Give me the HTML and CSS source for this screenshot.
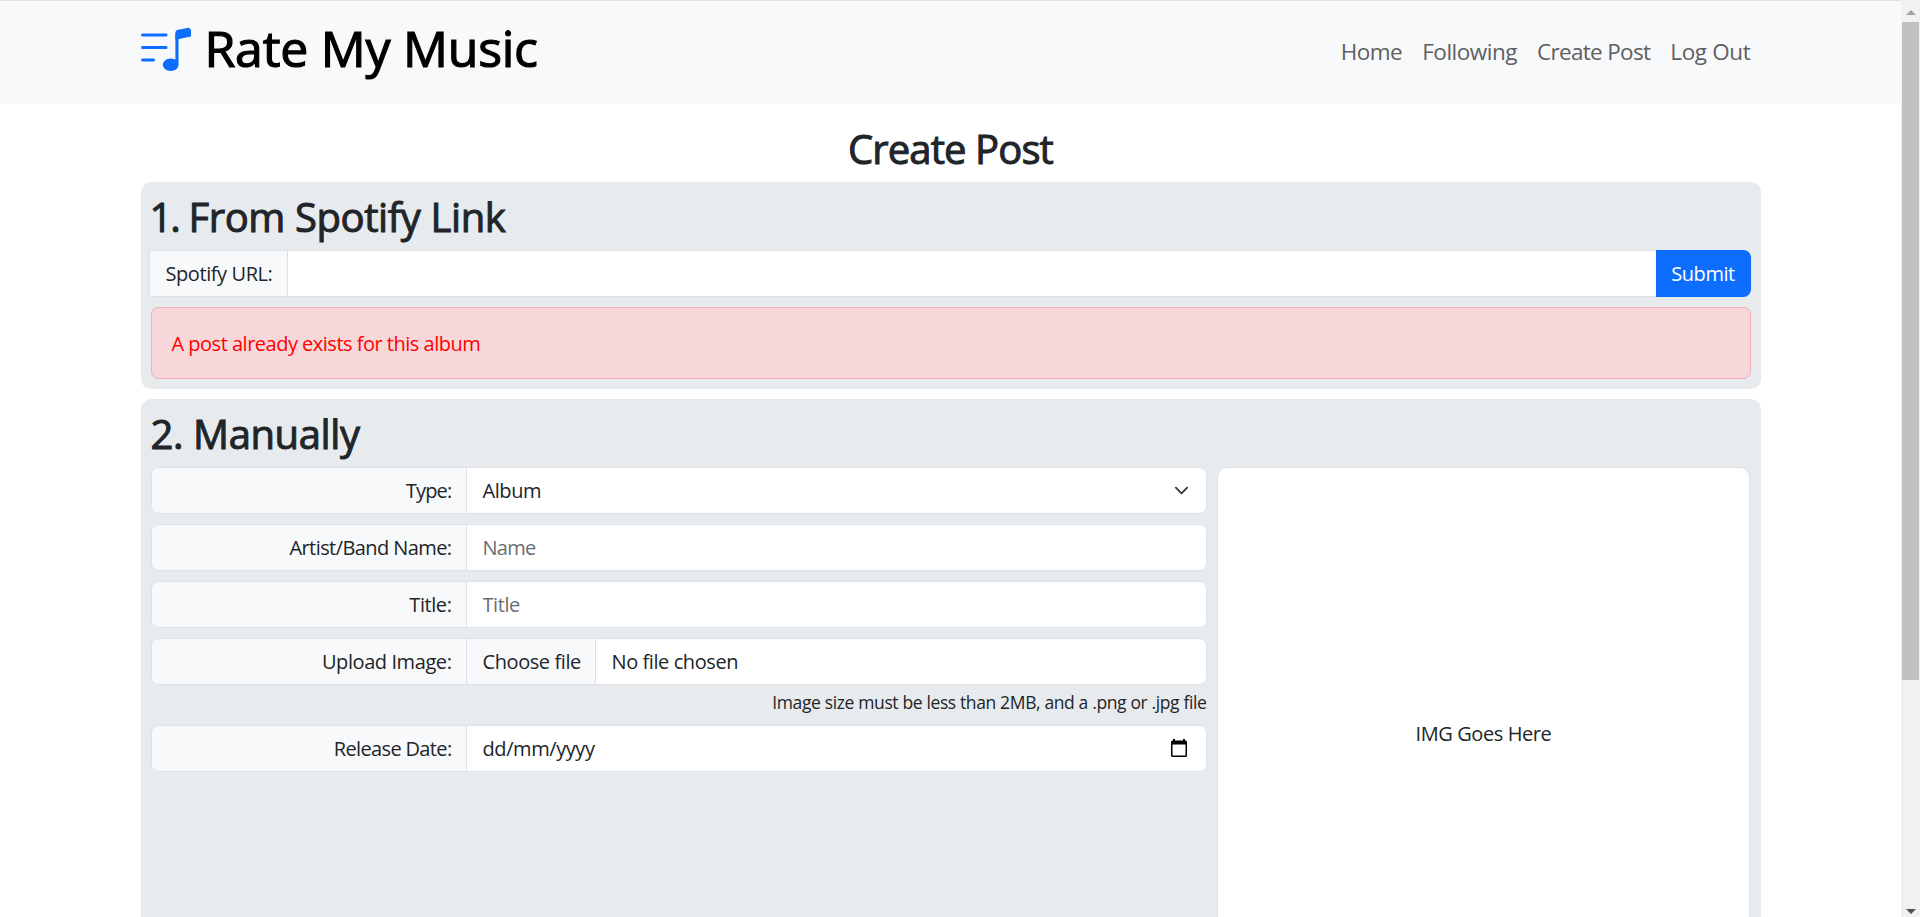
FILE: index.html
```html
<!DOCTYPE html>
<html lang="en">
<head>
<meta charset="utf-8">
<title>Rate My Music</title>
<link rel="stylesheet" href="styles.css">
</head>
<body>
<div class="page">
  <header class="navbar">
    <div class="container navbar-inner">
      <div class="brand">
        <svg class="brand-icon" viewBox="0 0 16 16" fill="currentColor">
          <path d="M12 13c0 1.105-1.12 2-2.5 2S7 14.105 7 13s1.12-2 2.5-2 2.5.895 2.5 2z"/>
          <path d="M12 3v10h-1V3h1z"/>
          <path d="M11 2.82a1 1 0 0 1 .804-.98l3-.6A1 1 0 0 1 16 2.22V4l-5 1V2.82z"/>
          <path d="M0 11.5a.5.5 0 0 1 .5-.5H4a.5.5 0 0 1 0 1H.5a.5.5 0 0 1-.5-.5zm0-4A.5.5 0 0 1 .5 7H8a.5.5 0 0 1 0 1H.5a.5.5 0 0 1-.5-.5zm0-4A.5.5 0 0 1 .5 3H8a.5.5 0 0 1 0 1H.5a.5.5 0 0 1-.5-.5z"/>
        </svg>
        <span class="brand-name">Rate My Music</span>
      </div>
      <nav class="nav">
        <a class="nav-link">Home</a>
        <a class="nav-link">Following</a>
        <a class="nav-link nav-link-create">Create Post</a>
        <a class="nav-link nav-link-logout">Log Out</a>
      </nav>
    </div>
  </header>

  <main class="container">
    <h1 class="heading page-title">Create Post</h1>

    <section class="card">
      <h2 class="heading spotify-heading"><span class="step">1.</span> From Spotify Link</h2>
      <form class="input-group url-group">
        <label class="addon">Spotify URL:</label>
        <input class="control" type="text">
        <button class="submit" type="button">Submit</button>
      </form>
      <div class="alert">A post already exists for this album</div>
    </section>

    <section class="card">
      <h2 class="heading manual-heading">2. Manually</h2>
      <div class="manual">
        <form class="fields">
          <div class="input-group">
            <label class="addon label type-label">Type:</label>
            <div class="control select">
              <span>Album</span>
              <svg class="chevron" viewBox="0 0 16 16"><path d="m2 5 6 6 6-6"/></svg>
            </div>
          </div>
          <div class="input-group">
            <label class="addon label artist-label">Artist/Band Name:</label>
            <input class="control name-input" type="text" placeholder="Name">
          </div>
          <div class="input-group">
            <label class="addon label">Title:</label>
            <input class="control" type="text" placeholder="Title">
          </div>
          <div class="upload">
            <div class="input-group">
              <label class="addon label">Upload Image:</label>
              <div class="control file"><span class="file-button">Choose file</span><span class="file-name">No file chosen</span></div>
            </div>
            <div class="note">Image size must be less than 2MB, and a .png or .jpg file</div>
          </div>
          <div class="input-group">
            <label class="addon label date-label">Release Date:</label>
            <div class="control date">
              <span>dd/mm/yyyy</span>
              <svg class="calendar" viewBox="0 0 16 18"><path d="M2 0h2v1.5h8V0h2v1.5h.5A1.5 1.5 0 0 1 16 3v13.500a1.500 1.500 0 0 1-1.500 1.500h-13A1.500 1.500 0 0 1 0 16.500V3a1.500 1.500 0 0 1 1.500-1.500H2zM1.500 5.500v11h13v-11z" fill-rule="evenodd"/></svg>
            </div>
          </div>
        </form>
        <div class="preview">IMG Goes Here</div>
      </div>
    </section>
  </main>
</div>

<div class="scrollbar">
  <svg class="arrow arrow-up" viewBox="0 0 10 5"><path d="M0 5 5 0l5 5z"/></svg>
  <div class="thumb"></div>
  <svg class="arrow arrow-down" viewBox="0 0 10 5"><path d="M0 0h10L5 5z"/></svg>
</div>
</body>
</html>
```

FILE: styles.css
```css
* { box-sizing: border-box; }

body {
  margin: 0;
  height: 917px;
  overflow: hidden;
  display: flex;
  background: #fff;
  color: #212529;
  font: 400 20px/1.5 "Open Sans", "Noto Sans", sans-serif;
  letter-spacing: -0.42px;
}

.page { flex: 1; min-width: 0; height: 917px; overflow: hidden; border-top: 1px solid #e0e0dc; }
.container { width: 1620px; margin: 0 auto; }

/* Navigation */
.navbar { height: 103px; background: #f8f9fa; }
.navbar-inner { display: flex; justify-content: space-between; padding-right: 10px; }
.brand { display: flex; align-items: flex-start; gap: 14px; color: #000; }
.brand-icon { width: 50px; height: 50px; margin-top: 23px; color: #0d6efd; }
.brand-name { margin-top: 10px; font-size: 50px; letter-spacing: -0.25px; -webkit-text-stroke: 1.2px currentColor; }
.nav { display: flex; gap: 20px; padding-top: 34px; font-size: 22.5px; letter-spacing: -0.5px; color: #5e5f60; }
.nav-link-create { letter-spacing: -0.68px; }
.nav-link-logout { letter-spacing: -0.35px; }

/* Headings */
.heading { height: 48px; margin: 0 0 10px; padding-top: 1px; font-size: 40px; font-weight: 400; line-height: 48px; -webkit-text-stroke: 1px currentColor; }
.page-title { height: 68px; padding-top: 21px; text-align: center; letter-spacing: -0.9px; }
.spotify-heading { letter-spacing: -0.4px; }
.step { margin-left: -1px; letter-spacing: -2.2px; }
.manual-heading { letter-spacing: -0.4px; }

/* Panels */
.card { margin-bottom: 10px; padding: 10px; border-radius: 10px; background: #e8ebee; }

.input-group { display: flex; height: 47px; }
.addon,
.control { border: 1px solid #dee2e6; padding: 8px 15px 0 16px; font: inherit; line-height: 30px; letter-spacing: inherit; color: inherit; white-space: nowrap; }
.addon { background: #f8f9fa; }
.control { flex: 1; min-width: 0; margin-left: -1px; background: #fff; border-radius: 0 7.5px 7.5px 0; outline: none; }
input.control { padding-top: 0; padding-bottom: 0; }
input.control::placeholder { color: #6a6d71; opacity: 1; }
.label { width: 316px; padding-right: 14px; text-align: right; border-radius: 7.5px 0 0 7.5px; }

.url-group { margin-left: -2px; }
.url-group .addon { width: 139px; }
.url-group .control { border-radius: 0; }
.submit { width: 95px; margin-left: -1px; padding: 0; border: 0; border-radius: 0 7.5px 7.5px 0; background: #0d6efd; color: #fff; font: inherit; letter-spacing: -0.45px; }

.alert { height: 72px; margin-top: 10px; padding: 21px 20px 0; border: 1px solid #f1aeb5; border-radius: 7.5px; background: #f7d7da; color: #f00; letter-spacing: -0.5px; }

/* Manual entry */
.manual { display: flex; gap: 10px; }
.fields { display: flex; flex-direction: column; gap: 10px; width: 1056px; }
.type-label { letter-spacing: -0.8px; }
.artist-label { letter-spacing: -0.58px; }
.date-label { letter-spacing: -0.65px; }
.name-input { letter-spacing: -0.73px; }

.select,
.date { display: flex; justify-content: space-between; }
.chevron { width: 15px; height: 15px; margin: 7px 2px 0 0; fill: none; stroke: #343a40; stroke-width: 2; stroke-linecap: round; stroke-linejoin: round; }
.calendar { width: 16px; height: 18px; margin: 5px 4px 0 0; fill: #000; }

.file { display: flex; padding: 0; overflow: hidden; }
.file-button { width: 129px; padding: 8px 14px 0 16px; border-right: 1px solid #dee2e6; background: #f8f9fa; }
.file-name { padding: 8px 16px 0; }
.note { height: 30px; padding-top: 4px; text-align: right; font-size: 17.5px; line-height: 26px; letter-spacing: -0.37px; }

.preview { display: flex; align-items: center; justify-content: center; width: 533px; height: 534px; padding-left: 1px; border: 1px solid #dee2e6; border-radius: 10px; background: #fff; }

/* Window scrollbar */
.scrollbar { display: flex; flex-direction: column; align-items: center; width: 19px; height: 917px; padding: 10px 0 3px; background: #f1f1f1; }
.arrow { width: 10px; height: 5px; }
.arrow-up { fill: #a3a3a3; }
.arrow-down { margin-top: auto; fill: #505050; }
.thumb { width: 17px; height: 658px; margin-top: 7px; background: #c1c1c1; }
```
